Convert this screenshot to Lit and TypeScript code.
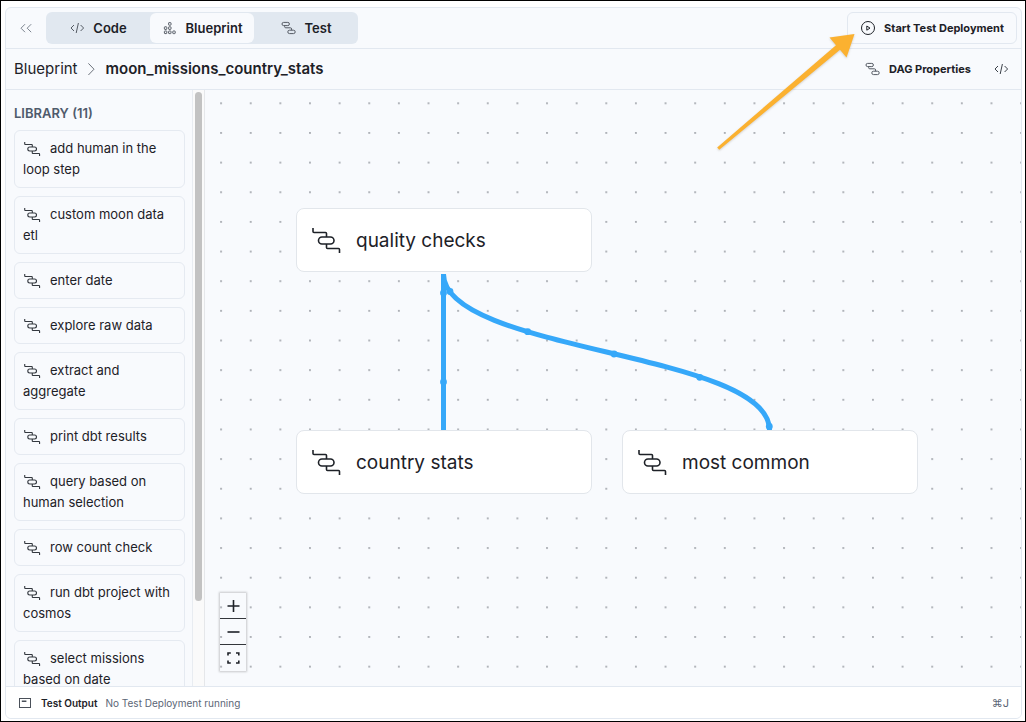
import { LitElement, html, css, svg } from "lit";
import { customElement, property } from "lit/decorators.js";

const PATHS: Record<string, { box: string; body: unknown }> = {
  task: {
    box: "0 0 28 25",
    body: svg`<path d="M1 0v3.5q0 1 1 1h11.5q1 0 1 1V9M14.5 16v3.5q0 1 1 1h11q1 0 1 1V25"/><rect x="6.5" y="9" width="15.5" height="7" rx="3.5"/>`,
  },
  chain: {
    box: "0 0 16 16",
    body: svg`<rect x="1" y="2.4" width="7.4" height="3.2" rx="1.6"/><rect x="6.8" y="10.2" width="7.4" height="3.4" rx="1.7"/><path d="M3.6 5.6v1q0 1.2 1.2 1.2h4.6q1.2 0 1.2 1.2v1.2"/>`,
  },
  code: { box: "0 0 16 16", body: svg`<path d="M5 5 2 8l3 3M11.6 5l3 3-3 3M9.4 3 7.2 13"/>` },
  blocks: {
    box: "0 0 16 16",
    body: svg`<rect x="6.6" y="2.6" width="2.4" height="2.6" rx=".5"/><rect x="6.6" y="6.8" width="2.4" height="2.6" rx=".5"/><rect x="2.4" y="6.8" width="2.4" height="2.6" rx=".5"/><rect x="2.4" y="11" width="2.4" height="2.6" rx=".5"/><rect x="6.6" y="11" width="2.4" height="2.6" rx=".5"/><rect x="10.8" y="11" width="2.4" height="2.6" rx=".5"/>`,
  },
  collapse: { box: "0 0 16 16", body: svg`<path d="M7 4.2 3 8.2l4 4M13.2 4.2l-4 4 4 4"/>` },
  chevron: { box: "0 0 16 16", body: svg`<path d="m4.4 2.4 5.6 5.8-5.6 5.8"/>` },
  play: { box: "0 0 16 16", body: svg`<circle cx="8" cy="8" r="6.5"/><path d="M6.8 6v4.2L10 8.1z"/>` },
  output: { box: "0 0 16 16", body: svg`<rect x="2.5" y="3.5" width="11" height="9"/><path stroke-width="1.6" d="M4.8 6.2h4.6"/>` },
  plus: { box: "0 0 16 16", body: svg`<path d="M8.5 2v12M2.5 8h12"/>` },
  minus: { box: "0 0 16 16", body: svg`<path d="M2.5 8h12"/>` },
  fit: { box: "0 0 16 16", body: svg`<path d="M3 5.6V3h2.8M11 3h2.8v2.6M13.8 10.4V13H11M5.8 13H3v-2.6"/>` },
};

@customElement("ui-icon")
export class UiIcon extends LitElement {
  static styles = css`
    :host { display: inline-block; width: 16px; height: 16px; flex: none; }
    svg { display: block; width: 100%; height: 100%; fill: none; stroke: currentColor; stroke-width: var(--icon-stroke, 1); overflow: visible; }
  `;
  @property() name = "task";
  render() {
    const icon = PATHS[this.name];
    return html`<svg viewBox=${icon.box} aria-hidden="true">${icon.body}</svg>`;
  }
}

const LIBRARY_TOTAL = 11;
const LIBRARY = [
  "add human in the loop step",
  "custom moon data etl",
  "enter date",
  "explore raw data",
  "extract and aggregate",
  "print dbt results",
  "query based on human selection",
  "row count check",
  "run dbt project with cosmos",
  "select missions based on date",
];

const NODES = [
  { label: "quality checks", x: 91, y: 118 },
  { label: "country stats", x: 91, y: 340 },
  { label: "most common", x: 417, y: 340 },
];

const BEADS = [
  [238.5, 203], [245, 201.5], [238.5, 292], [322.7, 241.7], [409, 264], [494.7, 287.3], [564.3, 336.5],
];

@customElement("app-root")
export class AppRoot extends LitElement {
  static styles = css`
    :host { display: block; height: 100vh; font-family: Inter, "Liberation Sans", sans-serif; font-size: 13px; line-height: 20px; color: #1d2127; }
    * { box-sizing: border-box; }
    button { font: inherit; color: inherit; background: none; border: 0; padding: 0; margin: 0; cursor: pointer; }
    .frame { position: relative; height: 100%; display: flex; padding: 6px 3px 2px 4px; border: 1px solid #000; background: #fff; }
    .panel { flex: 1; min-width: 0; display: flex; flex-direction: column; border: 1px solid #e2e8f0; border-radius: 6px; overflow: hidden; background: #f8fafd; }
    .bar { flex: none; display: flex; align-items: center; height: 41px; border-bottom: 1px solid #e2e8f0; }
    .top { padding: 0 4px 0 12px; gap: 12px; }
    .collapse { display: flex; color: #7d8590; }
    .tabs { display: flex; height: 32px; padding: 1px 0; border-radius: 6px; background: #e1e8f0; }
    .tab { display: flex; align-items: center; justify-content: center; gap: 8px; width: 104px; border-radius: 6px; font-weight: 600; }
    .tab.active { background: #f8fafd; }
    .tab ui-icon, .props ui-icon { color: #555b64; }
    .push { margin-left: auto; }
    .start { display: flex; align-items: center; gap: 8px; height: 32px; padding: 0 12px; border: 1px solid #e2e8f0; border-radius: 6px; font-size: 11px; font-weight: 700; }
    .crumbs { padding: 0 12px 0 8px; gap: 6px; font-size: 15px; }
    .crumbs a { color: inherit; text-decoration: none; }
    .crumbs h1 { margin: 0; font-size: 15px; font-weight: 600; }
    .crumbs > ui-icon { color: #6d737c; }
    .props { display: flex; align-items: center; gap: 8px; font-size: 11px; font-weight: 700; }
    .source { display: flex; margin-left: 16px; color: #3b4149; }
    .body { flex: 1; min-height: 0; display: flex; }
    .library { flex: none; width: 187px; overflow: hidden; padding: 13px 7px 0 8px; border-right: 1px solid #e8ecf1; }
    .library h2 { margin: 0 0 7px; font-size: 13px; line-height: 20px; font-weight: 600; color: #4f5b6c; }
    .list { list-style: none; margin: 0; padding: 0; display: grid; gap: 8px; }
    .card { padding: 7px 8px; border: 1px solid #e5eaf1; border-radius: 6px; line-height: 21px; }
    .card ui-icon { height: 14px; margin: 0 10px 0 1px; vertical-align: -3px; --icon-stroke: 2; color: #33383f; }
    .track { flex: none; width: 12px; padding: 2px; border-right: 1px solid #e5e7ea; background: #fafafa; }
    .thumb { width: 7px; height: 86%; border-radius: 4px; background: #c2c2c2; }
    .canvas { position: relative; flex: 1; min-width: 0; overflow: hidden; }
    .wires { position: absolute; inset: 0; width: 100%; height: 100%; }
    .wire { fill: none; stroke: #36a8f9; stroke-width: 5; }
    .bead { fill: #36a8f9; }
    .node { position: absolute; display: flex; align-items: center; gap: 16px; width: 296px; height: 64px; padding: 1px 15px 0; border: 1px solid #e2e6eb; border-radius: 8px; background: #fff; font-size: 19px; line-height: 28px; }
    .node ui-icon { width: 28px; height: 25px; --icon-stroke: 1.6; }
    .zoom { position: absolute; left: 15px; bottom: 15px; display: flex; flex-direction: column; box-shadow: 0 0 2px 1px rgba(0, 0, 0, 0.2); }
    .zoom button { display: flex; align-items: center; justify-content: center; width: 26px; height: 26px; border-bottom: 1px solid #33363b; }
    .zoom button:last-child { border-bottom: 0; }
    .zoom ui-icon { --icon-stroke: 1.6; }
    .footer { flex: none; display: flex; align-items: center; gap: 8px; height: 32px; padding: 0 12px 0 11px; border-top: 1px solid #e2e8f0; background: #fff; font-size: 10px; line-height: 16px; color: #5c6676; }
    .footer strong { font-weight: 600; color: #1d2127; }
    .footer ui-icon { color: #4a5059; }
    .footer .push { font-size: 11px; }
    .pointer { position: absolute; right: 160px; top: 25px; width: 150px; height: 130px; pointer-events: none; filter: drop-shadow(0 1px 1px rgba(120, 110, 90, 0.3)); }
  `;

  render() {
    return html`
      <div class="frame">
        <div class="panel">
          <header class="bar top">
            <button class="collapse" aria-label="Collapse"><ui-icon name="collapse"></ui-icon></button>
            <nav class="tabs">
              <button class="tab"><ui-icon name="code"></ui-icon>Code</button>
              <button class="tab active"><ui-icon name="blocks"></ui-icon>Blueprint</button>
              <button class="tab"><ui-icon name="chain"></ui-icon>Test</button>
            </nav>
            <button class="start push"><ui-icon name="play"></ui-icon>Start Test Deployment</button>
          </header>
          <div class="bar crumbs">
            <a href="#blueprint">Blueprint</a>
            <ui-icon name="chevron"></ui-icon>
            <h1>moon_missions_country_stats</h1>
            <button class="props push"><ui-icon name="chain"></ui-icon>DAG Properties</button>
            <button class="source" aria-label="View code"><ui-icon name="code"></ui-icon></button>
          </div>
          <div class="body">
            <aside class="library">
              <h2>LIBRARY (${LIBRARY_TOTAL})</h2>
              <ul class="list">
                ${LIBRARY.map((item) => html`<li class="card"><ui-icon name="task"></ui-icon>${item}</li>`)}
              </ul>
            </aside>
            <div class="track"><div class="thumb"></div></div>
            <main class="canvas">
              <svg class="wires" aria-hidden="true">
                <defs>
                  <pattern id="dots" x="1.3" y="-1.5" width="29.63" height="29.65" patternUnits="userSpaceOnUse">
                    <circle cx="14.8" cy="14.8" r="0.85" fill="#858991" />
                  </pattern>
                </defs>
                <rect width="100%" height="100%" fill="url(#dots)" />
                <path class="wire" d="M238.5 184V340" />
                <path class="wire" d="M238.5 184C238.5 262 564.5 262 564.5 340" />
                ${BEADS.map(([x, y]) => svg`<circle class="bead" cx=${x} cy=${y} r="3.4" />`)}
              </svg>
              ${NODES.map((n) => html`<div class="node" style="left:${n.x}px;top:${n.y}px"><ui-icon name="task"></ui-icon>${n.label}</div>`)}
              <div class="zoom">
                <button aria-label="Zoom in"><ui-icon name="plus"></ui-icon></button>
                <button aria-label="Zoom out"><ui-icon name="minus"></ui-icon></button>
                <button aria-label="Fit view"><ui-icon name="fit"></ui-icon></button>
              </div>
            </main>
          </div>
          <footer class="footer">
            <ui-icon name="output"></ui-icon><strong>Test Output</strong><span>No Test Deployment running</span>
            <span class="push">⌘J</span>
          </footer>
        </div>
        <svg class="pointer" viewBox="0 0 150 130" aria-hidden="true">
          <path fill="#fbb130" d="M2.2 121.4 121 19.2 114.5 11.5 139.5 8 131.5 31.5 125 23.8 4.2 123.8z" />
        </svg>
      </div>
    `;
  }
}
